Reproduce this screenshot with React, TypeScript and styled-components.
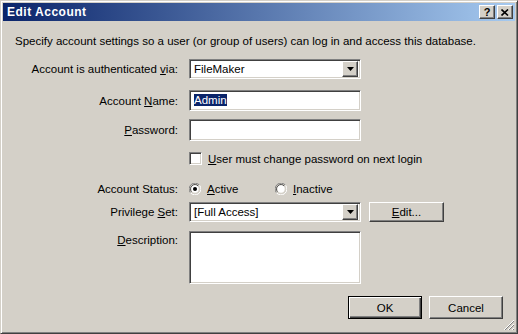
import React from "react";
import styled, { createGlobalStyle, css } from "styled-components";

const GlobalStyle = createGlobalStyle`
  html, body {
    margin: 0;
    padding: 0;
    background: #d4d0c8;
  }
  body {
    font-family: "Liberation Sans", Arial, sans-serif;
    font-size: 11px;
    color: #000;
  }
`;

const sunken = css`
  border-style: solid;
  border-width: 1px;
  border-color: #808080 #ffffff #ffffff #808080;
  box-shadow: inset 1px 1px 0 #404040, inset -1px -1px 0 #d4d0c8;
`;

const raised = css`
  border-style: solid;
  border-width: 1px;
  border-color: #ffffff #404040 #404040 #ffffff;
  box-shadow: inset -1px -1px 0 #808080, inset 1px 1px 0 #d4d0c8;
`;

const Window = styled.div`
  width: 518px;
  height: 334px;
  box-sizing: border-box;
  background: #d4d0c8;
  border-style: solid;
  border-width: 1px;
  border-color: #d4d0c8 #404040 #404040 #d4d0c8;
  box-shadow: inset 1px 1px 0 #ffffff, inset -1px -1px 0 #808080;
  padding: 2px;
  display: flex;
  flex-direction: column;
  position: relative;
  font-family: "Liberation Sans", Arial, sans-serif;
`;

const TitleBar = styled.div`
  height: 18px;
  background: linear-gradient(to right, #0a246a, #a6caf0);
  display: flex;
  align-items: center;
  padding: 0 2px 0 4px;
`;

const Title = styled.span`
  flex: 1;
  color: #fff;
  font-weight: bold;
  font-size: 12px;
  letter-spacing: 0.5px;
`;

const CaptionButton = styled.div`
  width: 16px;
  height: 14px;
  box-sizing: border-box;
  background: #d4d0c8;
  ${raised};
  display: flex;
  align-items: center;
  justify-content: center;
  font-weight: bold;
  font-size: 11px;
  line-height: 1;
  margin-left: 2px;
`;

const Body = styled.div`
  flex: 1;
  padding: 13px 0 0 12px;
  display: flex;
  flex-direction: column;
`;

const Intro = styled.p`
  margin: 0 0 11px 0;
  font-size: 11.5px;
  line-height: 14px;
`;

const Form = styled.div`
  display: grid;
  grid-template-columns: 163px 172px 1fr;
  column-gap: 11px;
  align-items: center;
`;

const Label = styled.label<{ $top?: boolean }>`
  grid-column: 1;
  text-align: right;
  font-size: 11.5px;
  align-self: ${(p) => (p.$top ? "start" : "center")};
  padding-top: ${(p) => (p.$top ? "3px" : "0")};
`;

const Spacer = styled.div<{ $h: number }>`
  grid-column: 1 / -1;
  height: ${(p) => p.$h}px;
`;

const Combo = styled.div`
  grid-column: 2;
  height: 20px;
  box-sizing: border-box;
  background: #fff;
  ${sunken};
  display: flex;
  align-items: center;
  padding: 2px;
  font-size: 11.5px;
`;

const ComboText = styled.span`
  flex: 1;
  padding-left: 2px;
`;

const DropButton = styled.div`
  width: 16px;
  height: 16px;
  box-sizing: border-box;
  background: #d4d0c8;
  ${raised};
  display: flex;
  align-items: center;
  justify-content: center;
`;

const Field = styled.div<{ $h?: number }>`
  grid-column: 2;
  height: ${(p) => p.$h ?? 21}px;
  box-sizing: border-box;
  background: #fff;
  ${sunken};
  padding: 3px 4px;
  font-size: 11.5px;
  line-height: 13px;
`;

const Selected = styled.span`
  background: #0a246a;
  color: #fff;
`;

const Check = styled.div`
  grid-column: 2 / 4;
  display: flex;
  align-items: center;
  gap: 6px;
  font-size: 11.5px;
`;

const CheckBox = styled.div`
  width: 13px;
  height: 13px;
  box-sizing: border-box;
  background: #fff;
  ${sunken};
`;

const Radios = styled.div`
  grid-column: 2 / 4;
  display: flex;
  align-items: center;
`;

const RadioItem = styled.div<{ $w?: number }>`
  display: flex;
  align-items: center;
  gap: 6px;
  width: ${(p) => (p.$w ? `${p.$w}px` : "auto")};
  font-size: 11.5px;
`;

const Button = styled.div<{ $default?: boolean }>`
  width: 74px;
  height: 23px;
  box-sizing: border-box;
  background: #d4d0c8;
  display: flex;
  align-items: center;
  justify-content: center;
  font-size: 11.5px;
  ${(p) =>
    p.$default
      ? css`
          border: 1px solid #000;
          box-shadow: inset 1px 1px 0 #fff, inset -1px -1px 0 #404040,
            inset -2px -2px 0 #808080;
        `
      : raised};
`;

const EditButton = styled(Button)`
  grid-column: 3;
  height: 20px;
  width: 75px;
  margin-left: -3px;
`;

const Footer = styled.div`
  display: flex;
  justify-content: flex-end;
  gap: 7px;
  padding: 12px 12px 0 0;
`;

const Grip = styled.svg`
  position: absolute;
  right: 2px;
  bottom: 2px;
`;

const U = styled.span`
  text-decoration: underline;
`;

const Arrow = () => (
  <svg width="7" height="4" viewBox="0 0 7 4">
    <path d="M0 0h7L3.5 4z" fill="#000" />
  </svg>
);

const Radio = ({ checked }: { checked?: boolean }) => (
  <svg width="12" height="12" viewBox="0 0 12 12">
    <path d="M10.5 2.2A5.5 5.5 0 0 0 1.5 9.8" stroke="#808080" fill="none" />
    <path d="M9.4 3.2A4.3 4.3 0 0 0 2.6 8.8" stroke="#404040" fill="none" />
    <path d="M1.5 9.8A5.5 5.5 0 0 0 10.5 2.2" stroke="#fff" fill="none" />
    <path d="M2.6 8.8A4.3 4.3 0 0 0 9.4 3.2" stroke="#d4d0c8" fill="none" />
    <circle cx="6" cy="6" r="3.7" fill="#fff" />
    {checked && <circle cx="6" cy="6" r="2" fill="#000" />}
  </svg>
);

export default function App() {
  return (
    <>
      <GlobalStyle />
      <Window>
        <TitleBar>
          <Title>Edit Account</Title>
          <CaptionButton>?</CaptionButton>
          <CaptionButton>
            <svg width="8" height="7" viewBox="0 0 8 7">
              <path d="M0.5 0.5L7 6.5M7 0.5L0.5 6.5" stroke="#000" strokeWidth="1.6" />
            </svg>
          </CaptionButton>
        </TitleBar>
        <Body>
          <Intro>
            Specify account settings so a user (or group of users) can log in and
            access this database.
          </Intro>
          <Form>
            <Label>
              Account is authenticated <U>v</U>ia:
            </Label>
            <Combo>
              <ComboText>FileMaker</ComboText>
              <DropButton>
                <Arrow />
              </DropButton>
            </Combo>
            <Spacer $h={11} />
            <Label>
              Account <U>N</U>ame:
            </Label>
            <Field>
              <Selected>Admin</Selected>
            </Field>
            <Spacer $h={8} />
            <Label>
              <U>P</U>assword:
            </Label>
            <Field $h={22} />
            <Spacer $h={11} />
            <Check>
              <CheckBox />
              <span>
                <U>U</U>ser must change password on next login
              </span>
            </Check>
            <Spacer $h={18} />
            <Label>Account Status:</Label>
            <Radios>
              <RadioItem $w={86}>
                <Radio checked />
                <span>
                  <U>A</U>ctive
                </span>
              </RadioItem>
              <RadioItem>
                <Radio />
                <span>
                  <U>I</U>nactive
                </span>
              </RadioItem>
            </Radios>
            <Spacer $h={7} />
            <Label>
              Privilege <U>S</U>et:
            </Label>
            <Combo>
              <ComboText>[Full Access]</ComboText>
              <DropButton>
                <Arrow />
              </DropButton>
            </Combo>
            <EditButton>
              <span>
                <U>E</U>dit...
              </span>
            </EditButton>
            <Spacer $h={9} />
            <Label $top>
              <U>D</U>escription:
            </Label>
            <Field $h={53} />
          </Form>
          <Footer>
            <Button $default>OK</Button>
            <Button>Cancel</Button>
          </Footer>
        </Body>
        <Grip width="12" height="12" viewBox="0 0 12 12">
          <path d="M11 1L1 11M11 5L5 11M11 9L9 11" stroke="#fff" />
          <path d="M11 2L2 11M11 6L6 11M11 10L10 11" stroke="#808080" />
        </Grip>
      </Window>
    </>
  );
}
